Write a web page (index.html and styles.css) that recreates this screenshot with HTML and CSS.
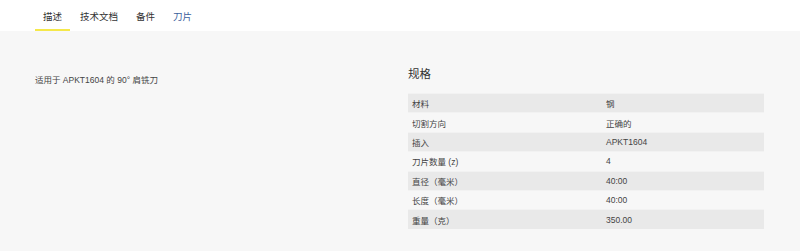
FILE: index.html
```html
<!DOCTYPE html>
<html>
  <head>
    <meta charset="UTF-8" />
    <title>APKT1604 肩铣刀</title>
    <link rel="stylesheet" href="styles.css">
  </head>
  <body>
    <div class="tabs">
      <a class="tab active">描述</a>
      <a class="tab">技术文档</a>
      <a class="tab">备件</a>
      <a class="tab link">刀片</a>
    </div>
    <div class="content">
      <div class="desc">适用于 APKT1604 的 90° 肩铣刀</div>
      <div class="specs">
        <h3>规格</h3>
        <table class="spec-table">
          <tr><td>材料</td><td>钢</td></tr>
          <tr><td>切割方向</td><td>正确的</td></tr>
          <tr><td>插入</td><td>APKT1604</td></tr>
          <tr><td>刀片数量 (z)</td><td>4</td></tr>
          <tr><td>直径（毫米）</td><td>40:00</td></tr>
          <tr><td>长度（毫米）</td><td>40:00</td></tr>
          <tr><td>重量（克）</td><td>350.00</td></tr>
        </table>
      </div>
    </div>
  </body>
</html>
```
FILE: styles.css
```css
body {
  margin: 0;
  background-color: #f7f7f7;
  font-family: "Liberation Sans", "Noto Sans CJK SC", sans-serif;
  color: #333;
}
.tabs {
  display: flex;
  gap: 2px;
  height: 31px;
  padding-left: 35px;
  background-color: #fff;
}
.tab {
  display: flex;
  align-items: center;
  padding: 2px 8px 0;
  font-size: 9.5px;
  color: #333;
  border-bottom: 2px solid transparent;
  cursor: pointer;
}
.tab.active {
  border-bottom-color: #f5e84a;
}
.tab.link {
  color: #3b609c;
}
.content {
  display: flex;
  padding: 36px 35px 0;
}
.desc {
  width: 373px;
  padding-top: 6px;
  font-size: 8.5px;
  color: #444;
}
.specs {
  width: 356px;
}
.specs h3 {
  margin: 0 0 12px;
  font-size: 11.5px;
  font-weight: normal;
  color: #333;
  line-height: 14px;
}
.spec-table {
  width: 100%;
  border-collapse: collapse;
  font-size: 8.5px;
  color: #444;
}
.spec-table td {
  height: 18.4px;
  padding: 0 4px;
  border-top: 1px solid #f2f2f2;
}
.spec-table td:first-child {
  width: 186px;
}
.spec-table tr:nth-child(odd) td {
  background-color: #e9e9e9;
}
```
